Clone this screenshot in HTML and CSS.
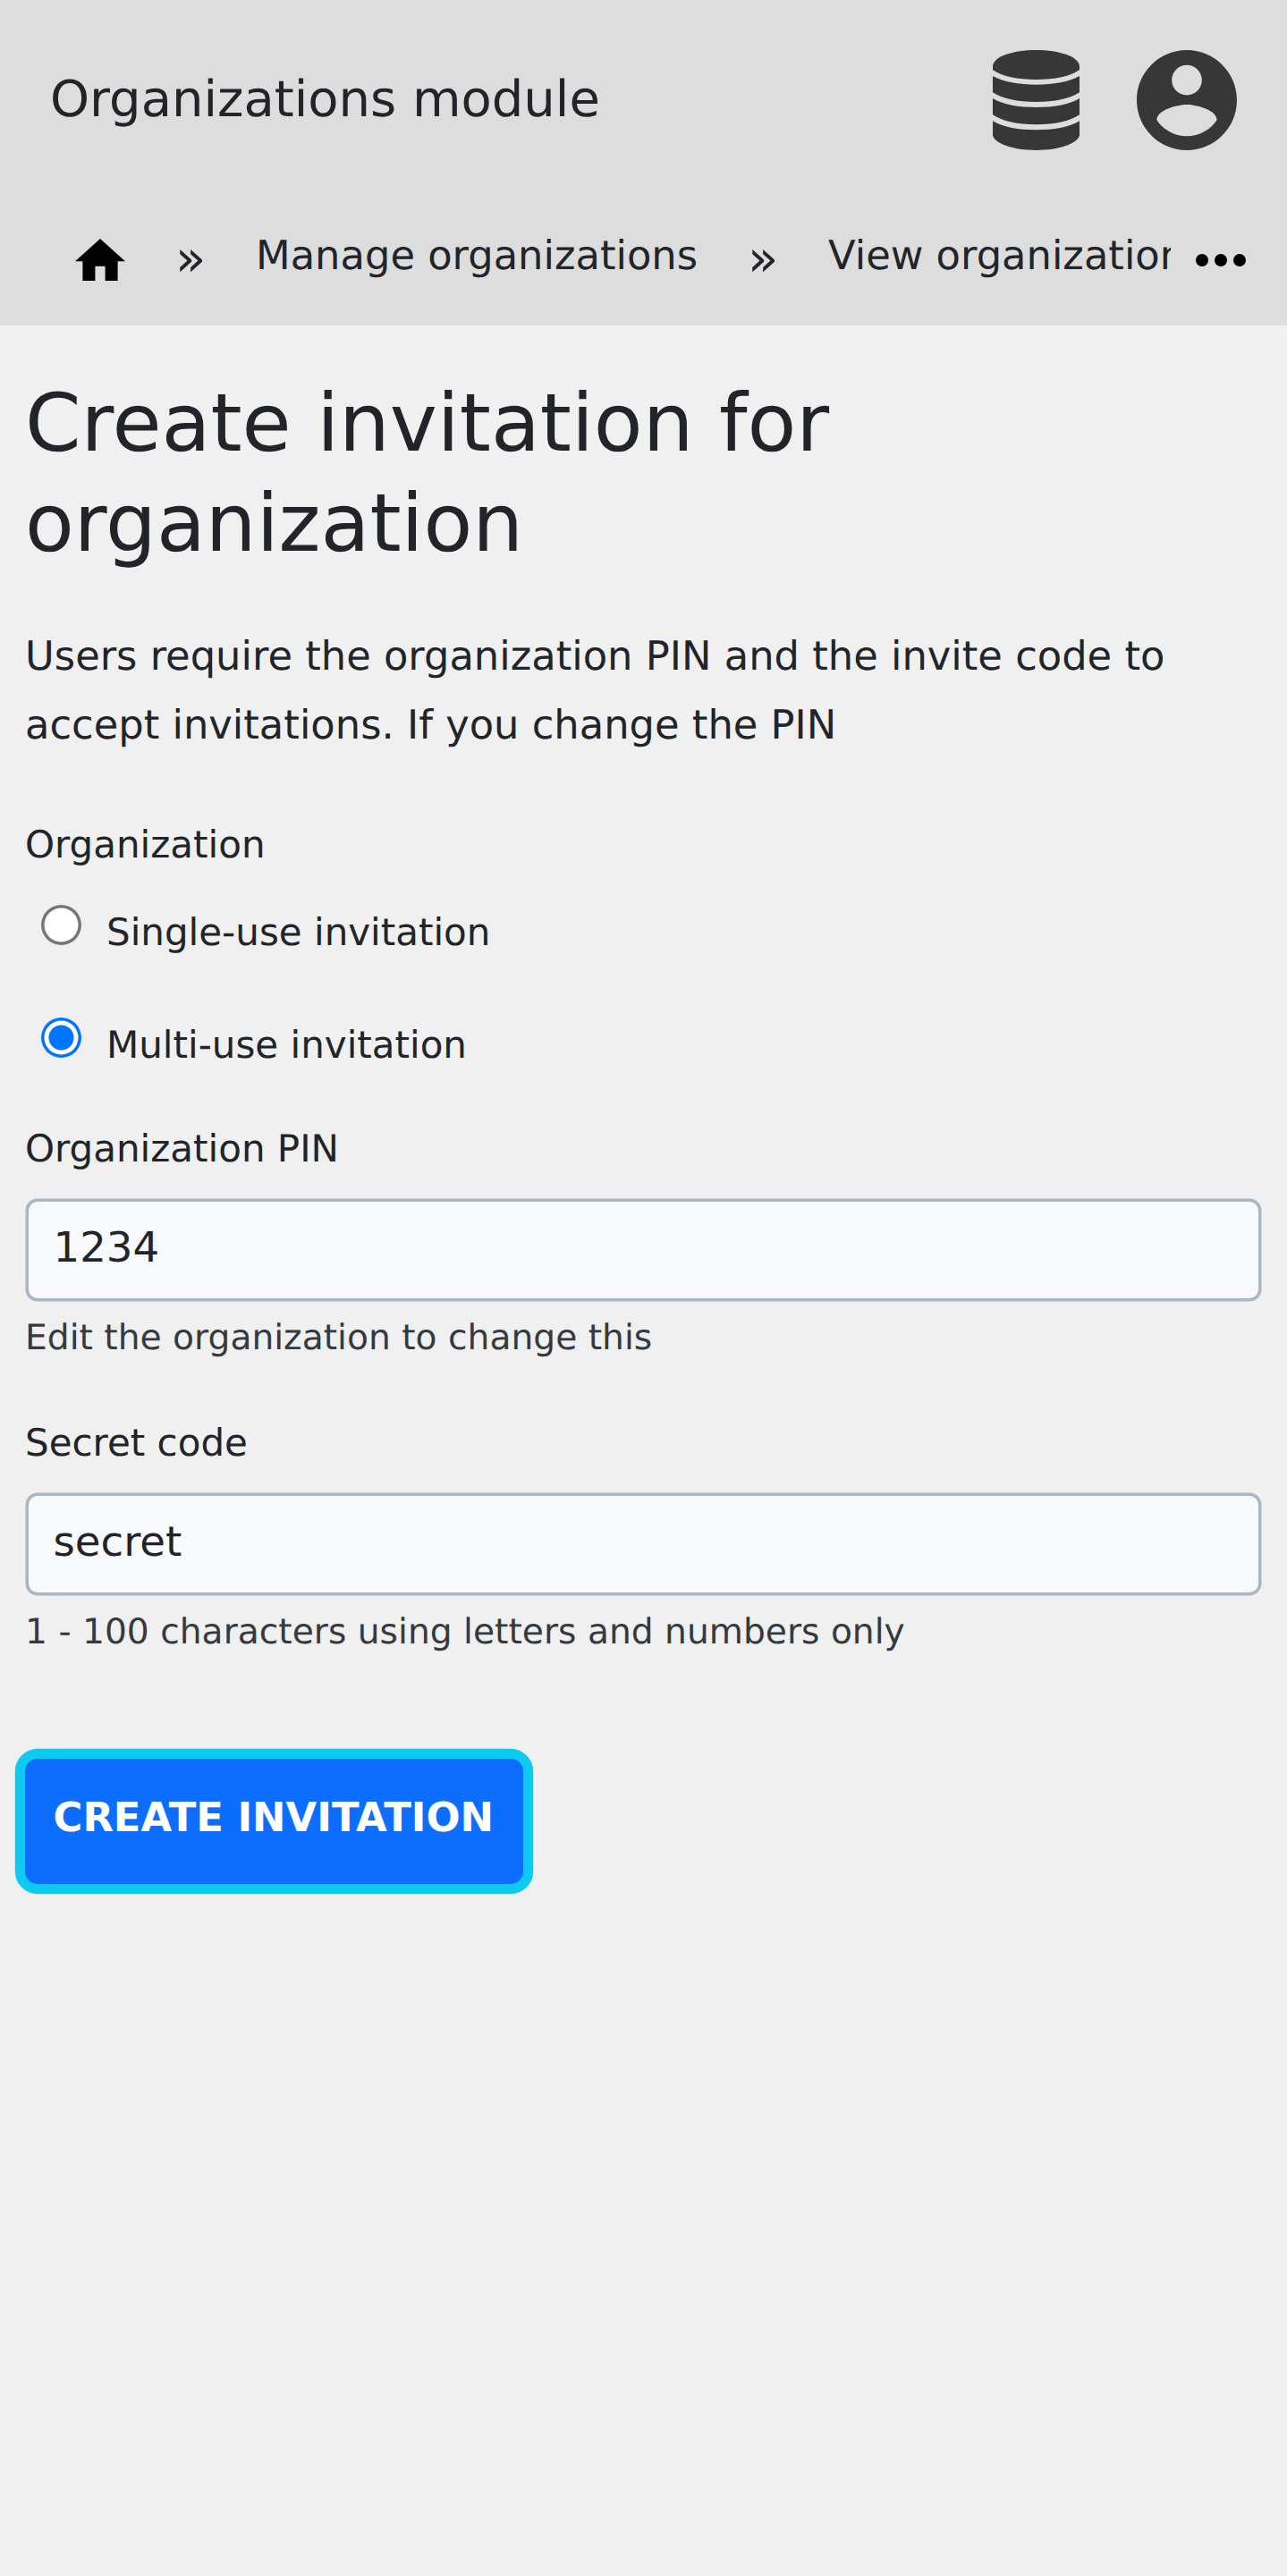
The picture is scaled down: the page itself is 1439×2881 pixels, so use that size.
FILE: index.html
```html
<!DOCTYPE html>
<html lang="en">
<head>
<meta charset="utf-8">
<title>Create invitation for organization</title>
<link rel="stylesheet" href="styles.css">
</head>
<body>
<header class="header">
  <div class="topbar">
    <span class="module-title">Organizations module</span>
    <svg class="icon-database" viewBox="0 0 290 336" preserveAspectRatio="none">
      <path d="M0 54C2 22 66 0 145 0S288 22 290 54V66C262 88 206 99 145 99S28 88 0 66Z"/>
      <path d="M0 87C34 107 88 116 145 116S256 107 290 87V142C258 164 206 174 145 174S32 164 0 142Z"/>
      <path d="M0 162C34 183 88 192 145 192S256 183 290 162V217C258 239 206 250 145 250S32 239 0 217Z"/>
      <path d="M0 238C34 259 88 268 145 268S256 259 290 238V286C284 314 222 336 145 336S6 314 0 286Z"/>
    </svg>
    <svg class="icon-account" viewBox="2 2 20 20">
      <path d="M12 2C6.48 2 2 6.48 2 12s4.48 10 10 10 10-4.48 10-10S17.52 2 12 2zm0 3c1.66 0 3 1.34 3 3s-1.34 3-3 3-3-1.34-3-3 1.34-3 3-3zm0 14.2c-2.5 0-4.71-1.28-6-3.22.03-1.99 4-3.08 6-3.08 1.99 0 5.97 1.09 6 3.08-1.29 1.94-3.5 3.22-6 3.22z"/>
    </svg>
  </div>
  <nav class="breadcrumbs">
    <div class="trail">
      <svg class="icon-home" viewBox="2 3 20 17"><path d="M10 20v-6h4v6h5v-8h3L12 3 2 12h3v8z"/></svg>
      <span class="separator">»</span>
      <a class="crumb">Manage organizations</a>
      <span class="separator">»</span>
      <a class="crumb">View organization</a>
    </div>
    <svg class="icon-more" viewBox="4 10 16 4"><circle cx="6" cy="12" r="2"/><circle cx="12" cy="12" r="2"/><circle cx="18" cy="12" r="2"/></svg>
  </nav>
</header>
<main class="content">
  <h1 class="heading">Create invitation for organization</h1>
  <p class="intro">Users require the organization PIN and the invite code to accept invitations. If you change the PIN</p>
  <form class="form">
    <div class="label">Organization</div>
    <div class="options">
      <label class="option"><input class="radio" type="radio" name="type">Single-use invitation</label>
      <label class="option"><input class="radio" type="radio" name="type" checked>Multi-use invitation</label>
    </div>
    <div class="field">
      <label class="label" for="pin">Organization PIN</label>
      <input class="input" id="pin" type="text" value="1234">
      <div class="hint">Edit the organization to change this</div>
    </div>
    <div class="field">
      <label class="label" for="code">Secret code</label>
      <input class="input" id="code" type="text" value="secret">
      <div class="hint">1 - 100 characters using letters and numbers only</div>
    </div>
    <button class="submit" type="button">CREATE INVITATION</button>
  </form>
</main>
</body>
</html>
```
FILE: styles.css
```css
* { box-sizing: border-box; }

body {
  margin: 0;
  min-height: 2881px;
  background: #f0f0f0;
  color: #212529;
  font-family: "DejaVu Sans", sans-serif;
  text-rendering: geometricPrecision;
}

svg { display: block; flex: none; }

.header { height: 364px; background: #ddd; }

.topbar {
  display: flex;
  align-items: center;
  height: 224px;
  padding: 0 56px;
  fill: #373737;
}

.module-title {
  flex: 1;
  font-size: 56px;
  line-height: 84px;
}

.icon-database { width: 97px; height: 112px; margin-right: 64px; }
.icon-account { width: 112px; height: 112px; }

.breadcrumbs { display: flex; height: 140px; }

.trail {
  display: flex;
  align-items: flex-start;
  width: 1309px;
  padding-left: 84px;
  overflow: hidden;
  white-space: nowrap;
}

.icon-home { width: 56px; height: 47.6px; margin-top: 42.6px; }

.separator {
  flex: none;
  width: 34px;
  margin: 24px 56px 0 56px;
  font-size: 56px;
  line-height: 84px;
}

.crumb {
  flex: none;
  margin-top: 28px;
  font-size: 44.8px;
  line-height: 67px;
}

.icon-more { width: 56px; height: 14px; margin: 59.5px 0 0 28px; }

.content { padding: 54px 28px 0; }

.heading {
  width: 1000px;
  margin: 0 0 53px;
  font-size: 89.6px;
  font-weight: 400;
  line-height: 112px;
}

.intro {
  margin: 0 0 64px;
  font-size: 44.8px;
  line-height: 77px;
}

.label {
  display: block;
  font-size: 42px;
  line-height: 63px;
}

.options {
  display: flex;
  flex-direction: column;
  gap: 63px;
  margin: 35px 0 53px;
}

.option {
  display: flex;
  align-items: flex-start;
  font-size: 42px;
  line-height: 63px;
}

.radio {
  appearance: none;
  width: 45px;
  height: 45px;
  margin: 1px 28px 0 18px;
  border-radius: 50%;
  background: #fff;
  box-shadow: inset 0 0 0 3.5px #767676;
}

.radio:checked {
  background: radial-gradient(circle, #0075ff 13.5px, #fff 14.5px);
  box-shadow: inset 0 0 0 3.5px #0075ff;
}

.field { margin-bottom: 56px; }

.input {
  display: block;
  width: 1375px;
  height: 108px;
  margin: 28px 4px 15px;
  padding: 0 27.5px 6px;
  border: 0;
  border-radius: 10px;
  outline: 0;
  background: #f8f9fb;
  box-shadow: 0 0 0 3.5px #a9b6c3;
  color: #212529;
  font-family: inherit;
  font-size: 46.67px;
}

.hint {
  color: #343a40;
  font-size: 39.2px;
  line-height: 59px;
}

.submit {
  display: block;
  width: 556.5px;
  height: 140px;
  margin-top: 112px;
  padding: 0 1px 9px 0;
  border: 0;
  border-radius: 14px;
  background: #0d6efd;
  box-shadow: 0 0 0 11.2px #0dcaf0;
  color: #fff;
  font-family: inherit;
  font-size: 44.8px;
  font-weight: 700;
  white-space: nowrap;
}
```
